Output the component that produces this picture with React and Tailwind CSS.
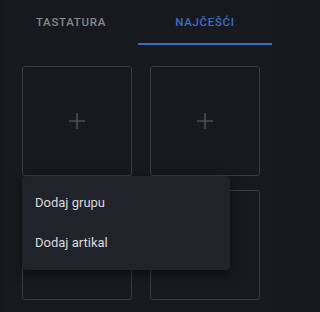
import React from 'react';

const Cell = ({ plus }) => (
  <div className="flex h-[110px] items-center justify-center rounded-[3px] border border-[#3a3b41]">
    {plus && (
      <svg width="18" height="18" viewBox="0 0 18 18" className="text-[#4a4c54]">
        <path d="M9 1v16M1 9h16" stroke="currentColor" strokeWidth="1.6" />
      </svg>
    )}
  </div>
);

export default function App() {
  return (
    <div className="min-h-screen w-full bg-[#17181d]">
      <div className="h-[312px] w-[277px] pl-[4px] pr-[5px]" style={{ fontFamily: 'Roboto, "Liberation Sans", sans-serif' }}>
        <div className="relative h-full bg-[#18191e]">
          <div className="flex h-[45px]">
            <div className="flex w-[134px] items-center justify-center pt-[1px] text-[11.5px] font-medium tracking-[0.06em] text-[#85878d]">TASTATURA</div>
            <div className="flex w-[134px] items-center justify-center border-b-2 border-[#3a6ec2] pt-[3px] text-[11.5px] font-medium tracking-[0.06em] text-[#3a6ec2]">NAJČEŠĆI</div>
          </div>
          <div className="grid grid-cols-[110px_110px] gap-x-[18px] gap-y-[14px] pl-[18px] pt-[21px]">
            <Cell plus />
            <Cell plus />
            <Cell />
            <Cell />
          </div>
          <div className="absolute left-[18px] top-[176px] w-[208px] rounded-[4px] bg-[#21232b] py-[7px] shadow-[0_4px_12px_rgba(0,0,0,0.45)]">
            <div className="flex h-[40px] items-center px-[13px] text-[13px] text-[#d7d8dc]">Dodaj grupu</div>
            <div className="flex h-[40px] items-center px-[13px] text-[13px] text-[#d7d8dc]">Dodaj artikal</div>
          </div>
        </div>
      </div>
    </div>
  );
}
